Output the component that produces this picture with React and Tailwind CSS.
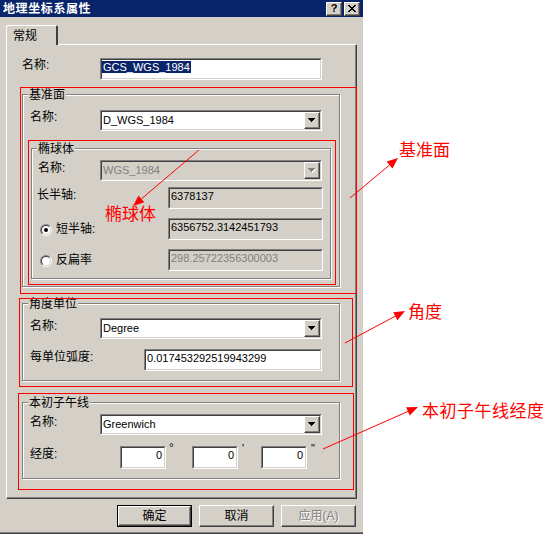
import React from "react";

const FONT = "font-['Liberation_Sans','Noto_Sans_CJK_SC',sans-serif]";

function Sunken({ className = "", bg = "bg-white", children }) {
  return (
    <div className={`border border-t-[#808080] border-l-[#808080] border-b-white border-r-white ${className}`}>
      <div className={`flex h-full w-full border border-t-[#404040] border-l-[#404040] border-b-[#d4d0c8] border-r-[#d4d0c8] ${bg}`}>
        {children}
      </div>
    </div>
  );
}

function Raised({ className = "", children }) {
  return (
    <div className={`flex items-center justify-center border border-t-white border-l-white border-r-[#404040] border-b-[#404040] bg-[#d4d0c8] shadow-[inset_-1px_-1px_0_#808080] ${className}`}>
      {children}
    </div>
  );
}

function Triangle({ disabled }) {
  return (
    <svg width="8" height="5" viewBox="0 0 8 5" shapeRendering="crispEdges">
      {disabled && <polygon points="1,1 8,1 4.5,5" fill="#fff" />}
      <polygon points="0,0 7,0 3.5,4" fill={disabled ? "#808080" : "#000"} />
    </svg>
  );
}

function Combo({ value, disabled }) {
  return (
    <Sunken className="h-[21px] w-[222px]" bg={disabled ? "bg-[#d4d0c8]" : "bg-white"}>
      <span className={`flex flex-1 items-center pl-[1px] text-[11px] leading-[13px] ${disabled ? "text-[#808080]" : "text-black"}`}>
        {value}
      </span>
      <Raised className="h-full w-[16px]">
        <Triangle disabled={disabled} />
      </Raised>
    </Sunken>
  );
}

function Field({ value, className = "", gray, dim, right }) {
  return (
    <Sunken className={`h-[22px] ${className}`} bg={gray ? "bg-[#d4d0c8]" : "bg-white"}>
      <span
        className={`flex-1 pl-[1px] pr-[2px] text-[11px] leading-[14px] ${right ? "text-right" : ""} ${dim ? "text-[#808080]" : "text-black"}`}
      >
        {value}
      </span>
    </Sunken>
  );
}

function Group({ title, className = "", children }) {
  return (
    <div className={`relative flex flex-col border border-[#808080] shadow-[inset_1px_1px_0_#fff,1px_1px_0_#fff] ${className}`}>
      <span className="absolute left-[5px] top-[-7px] bg-[#d4d0c8] px-[1px] text-[12px] leading-[14px]">{title}</span>
      {children}
    </div>
  );
}

function Radio({ checked }) {
  return (
    <div className="h-[12px] w-[12px] rounded-full border border-t-[#808080] border-l-[#808080] border-b-white border-r-white">
      <div className="flex h-full w-full items-center justify-center rounded-full border border-t-[#404040] border-l-[#404040] border-b-[#d4d0c8] border-r-[#d4d0c8] bg-white">
        {checked && <div className="h-[4px] w-[4px] rounded-full bg-black" />}
      </div>
    </div>
  );
}

function Button({ label, primary, disabled }) {
  const inner = (
    <Raised className="h-full w-full">
      <span
        className={`text-[12px] leading-[14px] ${disabled ? "text-[#808080] [text-shadow:1px_1px_0_#fff]" : "text-black"}`}
      >
        {label}
      </span>
    </Raised>
  );
  return primary ? (
    <div className="h-[22px] w-[75px] border border-black">{inner}</div>
  ) : (
    <div className="h-[22px] w-[75px]">{inner}</div>
  );
}

function Arrow({ x1, y1, x2, y2 }) {
  const a = Math.atan2(y2 - y1, x2 - x1);
  const len = 11;
  const w = 4.5;
  const bx = x2 - len * Math.cos(a);
  const by = y2 - len * Math.sin(a);
  const px = -Math.sin(a) * w;
  const py = Math.cos(a) * w;
  return (
    <g>
      <line x1={x1} y1={y1} x2={bx} y2={by} stroke="#ff0000" strokeWidth="1" />
      <polygon points={`${x2},${y2} ${bx + px},${by + py} ${bx - px},${by - py}`} fill="#ff0000" />
    </g>
  );
}

const redBoxes = [
  [20, 87, 356, 293],
  [28, 140, 335, 284],
  [19, 298, 352, 386],
  [18, 393, 353, 489],
];

export default function App() {
  return (
    <div className={`relative h-[535px] w-[549px] overflow-hidden bg-white text-black ${FONT}`}>
      {/* dialog */}
      <div className="flex h-[534px] w-[363px] flex-col border-b border-[#404040] bg-[#d4d0c8] shadow-[inset_0_-1px_0_#808080]">
        {/* title bar */}
        <div className="flex h-[17px] items-center bg-[#0a246a] pl-[3px] pr-[3px]">
          <span className="flex-1 text-[12px] font-bold leading-[14px] tracking-[0.6px] text-white">地理坐标系属性</span>
          <div className="flex gap-[2px]">
            <Raised className="h-[14px] w-[16px]">
              <span className="text-[11px] font-bold leading-[11px]">?</span>
            </Raised>
            <Raised className="h-[14px] w-[16px]">
              <svg width="8" height="7" viewBox="0 0 8 7" shapeRendering="crispEdges">
                <path d="M0 0h2v1h-2zM6 0h2v1h-2zM1 1h2v1h-2zM5 1h2v1h-2zM2 2h4v1h-4zM3 3h2v1h-2zM2 4h4v1h-4zM1 5h2v1h-2zM5 5h2v1h-2zM0 6h2v1h-2zM6 6h2v1h-2z" fill="#000" />
              </svg>
            </Raised>
          </div>
        </div>

        {/* tab */}
        <div className="mt-[8px] flex px-[6px]">
          <div className="relative z-10 -mb-[1px] flex h-[20px] w-[52px] items-center rounded-t-[2px] border-l border-t border-r-2 border-l-white border-t-white border-r-[#404040] bg-[#d4d0c8] pl-[6px]">
            <span className="text-[12px] leading-[14px]">常规</span>
          </div>
        </div>

        {/* panel */}
        <div className="mx-[6px] flex h-[455px] flex-col border border-l-white border-t-white border-r-[#404040] border-b-[#404040] shadow-[inset_-1px_-1px_0_#808080]">
          <div className="mt-[13px] flex items-start">
            <span className="w-[93px] pl-[15px] text-[12px] leading-[14px]">名称:</span>
            <Sunken className="h-[22px] w-[222px]">
              <span className="text-[11px] leading-[14px]">
                <span className="bg-[#0a246a] pl-[1px] pr-[1px] text-white">GCS_WGS_1984</span>
              </span>
            </Sunken>
          </div>

          <Group title="基准面" className="ml-[15px] mt-[14px] h-[193px] w-[318px]">
            <div className="mt-[15px] flex items-start">
              <span className="w-[77px] pl-[7px] text-[12px] leading-[14px]">名称:</span>
              <Combo value="D_WGS_1984" />
            </div>
            <Group title="椭球体" className="ml-[8px] mt-[17px] h-[131px] w-[300px]">
              <div className="mt-[11px] flex items-start">
                <span className="mt-[1px] w-[68px] pl-[6px] text-[12px] leading-[14px]">名称:</span>
                <Combo value="WGS_1984" disabled />
              </div>
              <div className="mt-[6px] flex items-start">
                <span className="mt-[1px] w-[136px] pl-[5px] text-[12px] leading-[14px]">长半轴:</span>
                <Field value="6378137" className="w-[155px]" gray />
              </div>
              <div className="mt-[9px] flex items-start">
                <div className="flex w-[136px] items-center pl-[8px]">
                  <div className="mt-[5px]">
                    <Radio checked />
                  </div>
                  <span className="ml-[4px] mt-[4px] text-[12px] leading-[14px]">短半轴:</span>
                </div>
                <Field value="6356752.3142451793" className="w-[155px]" gray />
              </div>
              <div className="mt-[9px] flex items-start">
                <div className="flex w-[136px] items-center pl-[8px]">
                  <div className="mt-[5px]">
                    <Radio />
                  </div>
                  <span className="ml-[4px] mt-[4px] text-[12px] leading-[14px]">反扁率</span>
                </div>
                <Field value="298.25722356300003" className="w-[155px]" gray dim />
              </div>
            </Group>
          </Group>

          <Group title="角度单位" className="ml-[15px] mt-[16px] h-[78px] w-[318px]">
            <div className="mt-[14px] flex items-start">
              <span className="mt-[1px] w-[77px] pl-[7px] text-[12px] leading-[14px]">名称:</span>
              <Combo value="Degree" />
            </div>
            <div className="mt-[10px] flex items-start">
              <span className="mt-[1px] w-[121px] pl-[7px] text-[12px] leading-[14px]">每单位弧度:</span>
              <Field value="0.017453292519943299" className="w-[178px]" />
            </div>
          </Group>

          <Group title="本初子午线" className="ml-[15px] mt-[21px] h-[77px] w-[318px]">
            <div className="mt-[11px] flex items-start">
              <span className="mt-[1px] w-[77px] pl-[7px] text-[12px] leading-[14px]">名称:</span>
              <Combo value="Greenwich" />
            </div>
            <div className="mt-[11px] flex items-start">
              <span className="mt-[1px] w-[97px] pl-[7px] text-[12px] leading-[14px]">经度:</span>
              <Field value="0" className="h-[23px] w-[46px]" right />
              <span className="-mt-[4px] w-[26px] pl-[3px] text-[12px] leading-[12px]">°</span>
              <Field value="0" className="h-[23px] w-[46px]" right />
              <span className="-mt-[4px] w-[23px] pl-[4px] text-[11px] leading-[12px]">'</span>
              <Field value="0" className="h-[23px] w-[46px]" right />
              <span className="-mt-[4px] pl-[4px] text-[11px] leading-[12px]">"</span>
            </div>
          </Group>
        </div>

        {/* buttons */}
        <div className="mt-[6px] flex justify-end gap-[7px] pr-[7px]">
          <Button label="确定" primary />
          <Button label="取消" />
          <Button label="应用(A)" disabled />
        </div>
      </div>

      {/* annotations drawn over the screenshot */}
      <svg className="pointer-events-none absolute left-0 top-0" width="549" height="535">
        {redBoxes.map(([x1, y1, x2, y2], i) => (
          <rect key={i} x={x1 + 0.5} y={y1 + 0.5} width={x2 - x1} height={y2 - y1} fill="none" stroke="#ff0000" strokeWidth="1" />
        ))}
        <Arrow x1={199} y1={150} x2={133} y2={206} />
        <Arrow x1={350} y1={198} x2={398} y2={158} />
        <Arrow x1={345} y1={343} x2={405} y2={311} />
        <Arrow x1={323} y1={449} x2={418} y2={407} />
      </svg>
      <div className="absolute left-[105px] top-[205px] text-[17px] leading-[20px] text-[#ff0000]">椭球体</div>
      <div className="absolute left-[399px] top-[141px] text-[17px] leading-[20px] text-[#ff0000]">基准面</div>
      <div className="absolute left-[408px] top-[303px] text-[17px] leading-[20px] text-[#ff0000]">角度</div>
      <div className="absolute left-[422px] top-[402px] text-[17px] leading-[20px] tracking-[0.5px] text-[#ff0000]">本初子午线经度</div>
    </div>
  );
}
